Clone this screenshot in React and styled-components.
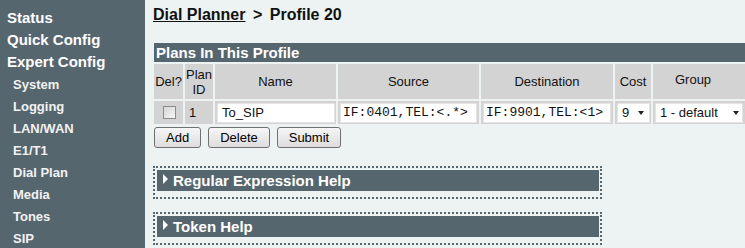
import React from 'react';
import styled, { createGlobalStyle } from 'styled-components';

const GlobalStyle = createGlobalStyle`
  html, body {
    margin: 0;
    padding: 0;
    overflow: hidden;
  }
  body {
    background: #edf3f3;
    font-family: "Liberation Sans", Arial, sans-serif;
    color: #111;
  }
`;

const SLATE = '#56666f';

const Page = styled.div`
  display: flex;
  height: 248px;
  overflow: hidden;
`;

const Sidebar = styled.nav`
  width: 145px;
  flex: none;
  background: ${SLATE};
  padding-top: 7px;
  box-sizing: border-box;
`;

const NavTop = styled.div`
  font-size: 15px;
  font-weight: bold;
  line-height: 22px;
  color: #fff;
  padding-left: 7px;
  white-space: nowrap;
`;

const SubList = styled.div`
  margin-top: 1px;
`;

const NavSub = styled.div`
  font-size: 13px;
  font-weight: bold;
  line-height: 22px;
  color: #f2f2f2;
  padding-left: 13px;
  white-space: nowrap;
`;

const Main = styled.main`
  flex: 1;
  min-width: 0;
  padding: 6px 0 0 8px;
`;

const Title = styled.h1`
  margin: 0;
  font-size: 16px;
  line-height: 18px;
  font-weight: bold;
  color: #111;
  white-space: nowrap;

  a {
    color: inherit;
    text-decoration: underline;
  }

  .sep {
    margin: 0 3px;
  }
`;

const PlanTable = styled.table`
  margin: 17px 0 0 -1px;
  border-collapse: separate;
  border-spacing: 2px;
  table-layout: fixed;
  width: 597px;
  font-size: 13px;
`;

const Col = styled.col`
  width: ${(p) => p.$w}px;
`;

const BarCell = styled.th`
  box-sizing: border-box;
  background: ${SLATE};
  color: #fff;
  font-size: 15px;
  font-weight: bold;
  text-align: left;
  height: 19px;
  line-height: 19px;
  padding: 0 2px;
`;

const HeadCell = styled.th`
  box-sizing: border-box;
  background: #d3d3d3;
  font-weight: normal;
  font-size: 13px;
  line-height: 15px;
  height: 35px;
  padding: ${(p) => (p.$raise ? '0 14px 5px 0' : '0')};
  text-align: center;
  vertical-align: middle;
  color: #111;
`;

const DataCell = styled.td`
  box-sizing: border-box;
  background: #d3d3d3;
  height: 23px;
  padding: 0 0 0 ${(p) => (p.$indent ? 4 : 2)}px;
  vertical-align: middle;
  text-align: ${(p) => (p.$center ? 'center' : 'left')};
`;

const Check = styled.input`
  appearance: none;
  display: block;
  margin: 0 auto;
  width: 13px;
  height: 13px;
  border: 1px solid #8c8c8c;
  box-sizing: border-box;
  background: linear-gradient(135deg, #d6d6d6, #f6f6f6);
`;

const TextField = styled.input`
  display: block;
  box-sizing: border-box;
  width: ${(p) => p.$w}px;
  height: 20px;
  margin: 0;
  border: 1px solid #e4e4e4;
  background: #fff;
  padding: 0 ${(p) => (p.$mono ? 2 : 4)}px;
  font-family: ${(p) => (p.$mono ? '"Liberation Mono", "Courier New", monospace' : '"Liberation Sans", Arial, sans-serif')};
  font-size: 13px;
  color: #111;
  outline: none;
`;

const SelectWrap = styled.div`
  position: relative;
  width: ${(p) => p.$w}px;
  height: 20px;
`;

const Select = styled.select`
  appearance: none;
  display: block;
  width: 100%;
  height: 20px;
  margin: 0;
  box-sizing: border-box;
  border: 1px solid #e4e4e4;
  background: #fff;
  padding: 0 0 0 4px;
  font-family: "Liberation Sans", Arial, sans-serif;
  font-size: 13px;
  color: #111;
  outline: none;
`;

const Arrow = styled.span`
  position: absolute;
  right: ${(p) => p.$right}px;
  top: 8px;
  width: 0;
  height: 0;
  border-top: 4px solid #222;
  border-left: 3.5px solid transparent;
  border-right: 3.5px solid transparent;
  pointer-events: none;
`;

const Buttons = styled.div`
  display: flex;
  gap: 7px;
  margin: 1px 0 0 1px;
`;

const Button = styled.button`
  height: 21px;
  padding: 0 11px;
  border: 1px solid #707070;
  border-radius: 3px;
  background: linear-gradient(#f6f6f6, #dddddd);
  font-family: "Liberation Sans", Arial, sans-serif;
  font-size: 13px;
  color: #000;
`;

const HelpBox = styled.section`
  width: 449px;
  box-sizing: border-box;
  margin-top: ${(p) => p.$top}px;
  border: 2px dotted ${SLATE};
  padding: 2px 1px 6px 2px;
`;

const HelpBar = styled.div`
  height: 21px;
  background: ${SLATE};
  display: flex;
  align-items: center;
  gap: 5px;
  padding-left: 6px;
  color: #fff;
  font-size: 15px;
  font-weight: bold;
`;

const Caret = styled.span`
  width: 0;
  height: 0;
  margin-bottom: 4px;
  border-left: 5px solid #fff;
  border-top: 5px solid transparent;
  border-bottom: 5px solid transparent;
`;

const subItems = ['System', 'Logging', 'LAN/WAN', 'E1/T1', 'Dial Plan', 'Media', 'Tones', 'SIP'];

export default function App() {
  return (
    <>
      <GlobalStyle />
      <Page>
        <Sidebar>
          <NavTop>Status</NavTop>
          <NavTop>Quick Config</NavTop>
          <NavTop>Expert Config</NavTop>
          <SubList>
            {subItems.map((s) => (
              <NavSub key={s}>{s}</NavSub>
            ))}
          </SubList>
        </Sidebar>
        <Main>
          <Title>
            <a>Dial Planner</a> <span className="sep">&gt;</span> Profile 20
          </Title>
          <PlanTable>
            <colgroup>
              <Col $w={29} />
              <Col $w={28} />
              <Col $w={121} />
              <Col $w={141} />
              <Col $w={132} />
              <Col $w={36} />
              <Col $w={94} />
            </colgroup>
            <thead>
              <tr>
                <BarCell colSpan={7}>Plans In This Profile</BarCell>
              </tr>
              <tr>
                <HeadCell>Del?</HeadCell>
                <HeadCell>
                  Plan
                  <br />
                  ID
                </HeadCell>
                <HeadCell>Name</HeadCell>
                <HeadCell>Source</HeadCell>
                <HeadCell>Destination</HeadCell>
                <HeadCell>Cost</HeadCell>
                <HeadCell $raise>Group</HeadCell>
              </tr>
            </thead>
            <tbody>
              <tr>
                <DataCell $center>
                  <Check type="checkbox" />
                </DataCell>
                <DataCell $indent>1</DataCell>
                <DataCell>
                  <TextField $w={118} defaultValue="To_SIP" />
                </DataCell>
                <DataCell>
                  <TextField $w={137} $mono defaultValue="IF:0401,TEL:<.*>" />
                </DataCell>
                <DataCell>
                  <TextField $w={128} $mono defaultValue="IF:9901,TEL:<1>" />
                </DataCell>
                <DataCell>
                  <SelectWrap $w={33}>
                    <Select defaultValue="9">
                      <option value="9">9</option>
                    </Select>
                    <Arrow $right={6} />
                  </SelectWrap>
                </DataCell>
                <DataCell>
                  <SelectWrap $w={88}>
                    <Select defaultValue="1">
                      <option value="1">1 - default</option>
                    </Select>
                    <Arrow $right={4} />
                  </SelectWrap>
                </DataCell>
              </tr>
            </tbody>
          </PlanTable>
          <Buttons>
            <Button>Add</Button>
            <Button>Delete</Button>
            <Button>Submit</Button>
          </Buttons>
          <HelpBox $top={18}>
            <HelpBar>
              <Caret />
              Regular Expression Help
            </HelpBar>
          </HelpBox>
          <HelpBox $top={13}>
            <HelpBar>
              <Caret />
              Token Help
            </HelpBar>
          </HelpBox>
        </Main>
      </Page>
    </>
  );
}
